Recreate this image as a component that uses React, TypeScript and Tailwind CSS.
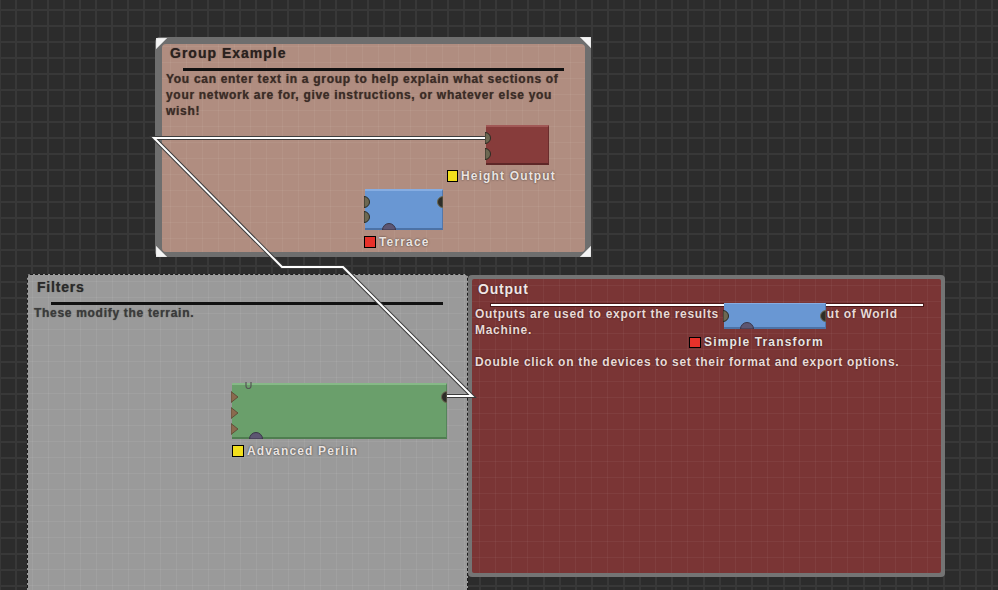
import React from "react";

const gridBg =
  "[background-image:linear-gradient(to_right,#383838_2px,transparent_2px),linear-gradient(to_bottom,#383838_2px,transparent_2px)] [background-size:16px_16px] [background-position:15px_9px]";

function InBump() {
  return (
    <svg width="7" height="12" viewBox="0 0 7 12" className="block">
      <path d="M0 0.5 A5.5 5.5 0 0 1 0 11.5 Z" fill="#6d6852" stroke="#2b2a22" strokeWidth="1" />
    </svg>
  );
}
function InArrow() {
  return (
    <svg width="8" height="12" viewBox="0 0 8 12" className="block">
      <polygon points="0,0.5 7,6 0,11.5" fill="#8a6a4e" stroke="#5a4432" strokeWidth="0.8" />
    </svg>
  );
}
function OutBump() {
  return (
    <svg width="7" height="12" viewBox="0 0 7 12" className="block">
      <path d="M7 0.5 A5.5 5.5 0 0 0 7 11.5 Z" fill="#2e2e28" stroke="#6d6852" strokeWidth="1" />
    </svg>
  );
}
function BottomBump() {
  return (
    <svg width="14" height="7" viewBox="0 0 14 7" className="block">
      <path d="M0.5 7 A6.5 6.5 0 0 1 13.5 7 Z" fill="#5d5672" stroke="#3a3548" strokeWidth="1" />
    </svg>
  );
}

function Corner({ d }: { d: string }) {
  return (
    <svg width="12" height="12" viewBox="0 0 12 12" className="block">
      <polygon points={d} fill="#f4f4f4" stroke="#cfcfcf" strokeWidth="0.5" />
    </svg>
  );
}

const labelCls =
  "font-['Liberation_Sans',Arial,sans-serif] font-bold text-[12px] leading-[14px] tracking-[1.15px] text-[#ebe4e1] [text-shadow:0_0_2px_rgba(0,0,0,0.7)] whitespace-nowrap";

const bodyCls = "text-[12px] leading-[16px] font-bold tracking-[0.7px] whitespace-nowrap";

export default function App() {
  return (
    <div className={`relative w-[998px] h-[590px] overflow-hidden bg-[#2c2c2c] ${gridBg} font-['Liberation_Sans',Arial,sans-serif]`}>
      {/* Group Example */}
      <div className="absolute left-[155px] top-[37px] w-[436px] h-[220px] rounded-[5px] bg-[#6e6e6e] pt-[7px] pl-[7px] pr-[6px] pb-[5px]">
        <div className="relative h-full rounded-[4px] bg-[#b08d80] [background-image:linear-gradient(to_right,rgba(255,255,255,0.05)_1px,transparent_1px),linear-gradient(to_bottom,rgba(255,255,255,0.05)_1px,transparent_1px)] [background-size:16px_16px] [background-position:8px_2px] pl-[4px]">
          <div className="pl-[4px] text-[14px] leading-[18px] font-bold tracking-[1px] text-[#2a211e] [text-shadow:0_0_1px_rgba(0,0,0,0.5)]">
            Group Example
          </div>
          <div className="ml-[17px] mt-[6px] w-[381px] h-[3px] bg-[#111]" />
          <div className={`${bodyCls} text-[#3a2c27] [text-shadow:0_0_1px_rgba(40,20,15,0.6)]`}>
            You can enter text in a group to help explain what sections of
            <br />
            your network are for, give instructions, or whatever else you
            <br />
            wish!
          </div>
        </div>
        <div className="absolute left-[1px] top-[1px]"><Corner d="0,0 11,0 0,11" /></div>
        <div className="absolute right-[0px] top-[0px]"><Corner d="1,0 12,0 12,11" /></div>
        <div className="absolute left-[1px] bottom-[0px]"><Corner d="0,1 0,12 11,12" /></div>
        <div className="absolute right-[0px] bottom-[0px]"><Corner d="12,1 12,12 1,12" /></div>
      </div>

      {/* Filters group */}
      <div className="absolute left-[27px] top-[274px] w-[441px] h-[340px] rounded-[3px] border border-dashed border-[#1c1c1c] bg-[#9a9a9a] [background-image:linear-gradient(to_right,rgba(255,255,255,0.06)_1px,transparent_1px),linear-gradient(to_bottom,rgba(255,255,255,0.06)_1px,transparent_1px)] [background-size:16px_16px] [background-position:4px_6px]">
        <div className="pl-[9px] pt-[3px] text-[14px] leading-[18px] font-bold tracking-[0.8px] text-[#2a2a2a] [text-shadow:0_0_1px_rgba(0,0,0,0.5)]">
          Filters
        </div>
        <div className="ml-[23px] mt-[6px] w-[392px] h-[3px] bg-[#111]" />
        <div className={`pl-[6px] ${bodyCls} text-[#3b3b3b] [text-shadow:0_0_1px_rgba(0,0,0,0.5)]`}>
          These modify the terrain.
        </div>
      </div>

      {/* Output group */}
      <div className="absolute left-[468px] top-[275px] w-[477px] h-[302px] rounded-[4px] bg-[#747474] p-[4px]">
        <div className="h-full rounded-[2px] bg-[#7a3535] [background-image:linear-gradient(to_right,rgba(255,255,255,0.045)_1px,transparent_1px),linear-gradient(to_bottom,rgba(255,255,255,0.045)_1px,transparent_1px)] [background-size:16px_16px] [background-position:7px_6px] pl-[3px]">
          <div className="pl-[3px] pt-[1px] text-[14px] leading-[18px] font-bold tracking-[0.8px] text-[#f1e6e4] [text-shadow:0_0_2px_rgba(0,0,0,0.6)]">
            Output
          </div>
          <div className="ml-[15px] mt-[5px] w-[434px] h-[4px] bg-white border border-[#4a1818]" />
          <div className={`mt-[-1px] ${bodyCls} text-[#ead9d6] [text-shadow:0_0_2px_rgba(0,0,0,0.6)]`}>
            Outputs are used to export the results of the network out of World
            <br />
            Machine.
          </div>
          <div className={`mt-[16px] ${bodyCls} text-[#ead9d6] [text-shadow:0_0_2px_rgba(0,0,0,0.6)]`}>
            Double click on the devices to set their format and export options.
          </div>
        </div>
      </div>

      {/* Wires */}
      <svg className="absolute left-0 top-0" width="998" height="590" viewBox="0 0 998 590">
        <polyline points="446,396 472,396 343,267 282,267 154,138 488,138" fill="none" stroke="#3c3c3c" strokeWidth="4" strokeLinejoin="miter" />
        <polyline points="446,396 472,396 343,267 282,267 154,138 488,138" fill="none" stroke="#ffffff" strokeWidth="2" strokeLinejoin="miter" />
      </svg>

      {/* Height Output node */}
      <div className="absolute left-[486px] top-[125px] w-[63px] h-[40px] bg-[#873c3b] border-t-2 border-t-[#a15856] border-b-2 border-b-[#5e2727] border-r border-r-[#6a2d2d]">
        <div className="absolute left-[-1px] top-[5px]"><InBump /></div>
        <div className="absolute left-[-1px] top-[21px]"><InBump /></div>
      </div>
      <div className="absolute left-[447px] top-[169px] flex items-center gap-[3px]">
        <div className="w-[11px] h-[12px] bg-[#f2df1c] border border-black" />
        <span className={labelCls}>Height Output</span>
      </div>

      {/* Terrace node */}
      <div className="absolute left-[365px] top-[189px] w-[78px] h-[41px] bg-[#6997d3] border-t-2 border-t-[#86ade2] border-b-2 border-b-[#4c72a6] border-r border-r-[#5378ab]">
        <div className="absolute left-[-1px] top-[5px]"><InBump /></div>
        <div className="absolute left-[-1px] top-[20px]"><InBump /></div>
        <div className="absolute right-[-1px] top-[5px]"><OutBump /></div>
        <div className="absolute left-[17px] bottom-[-2px]"><BottomBump /></div>
      </div>
      <div className="absolute left-[364px] top-[235px] flex items-center gap-[3px]">
        <div className="w-[12px] h-[12px] bg-[#e8312a] border border-black" />
        <span className={labelCls}>Terrace</span>
      </div>

      {/* Advanced Perlin node */}
      <div className="absolute left-[232px] top-[383px] w-[215px] h-[56px] bg-[#6a9f6b] border-t-2 border-t-[#86b987] border-b-2 border-b-[#4f7d50] border-r border-r-[#55845a]">
        <div className="absolute left-[-1px] top-[6px]"><InArrow /></div>
        <div className="absolute left-[-1px] top-[22px]"><InArrow /></div>
        <div className="absolute left-[-1px] top-[38px]"><InArrow /></div>
        <div className="absolute right-[-1px] top-[6px]"><OutBump /></div>
        <div className="absolute left-[17px] bottom-[-2px]"><BottomBump /></div>
        <svg className="absolute left-[13px] top-[-3px]" width="7" height="7" viewBox="0 0 7 7">
          <path d="M1 0 V4 A2.5 2.5 0 0 0 6 4 V0" fill="none" stroke="#555" strokeWidth="1.2" />
        </svg>
      </div>
      <div className="absolute left-[232px] top-[444px] flex items-center gap-[3px]">
        <div className="w-[12px] h-[12px] bg-[#f2df1c] border border-black" />
        <span className={labelCls}>Advanced Perlin</span>
      </div>

      {/* Simple Transform node */}
      <div className="absolute left-[724px] top-[303px] w-[102px] h-[26px] bg-[#6997d3] border-t border-t-[#86ade2] border-b-2 border-b-[#4c72a6] border-r border-r-[#5378ab]">
        <div className="absolute left-[-1px] top-[6px]"><InBump /></div>
        <div className="absolute right-[-1px] top-[6px]"><OutBump /></div>
        <div className="absolute left-[16px] bottom-[-2px]"><BottomBump /></div>
      </div>
      <div className="absolute left-[689px] top-[335px] flex items-center gap-[3px]">
        <div className="w-[12px] h-[11px] bg-[#e8312a] border border-black" />
        <span className={labelCls}>Simple Transform</span>
      </div>
    </div>
  );
}
